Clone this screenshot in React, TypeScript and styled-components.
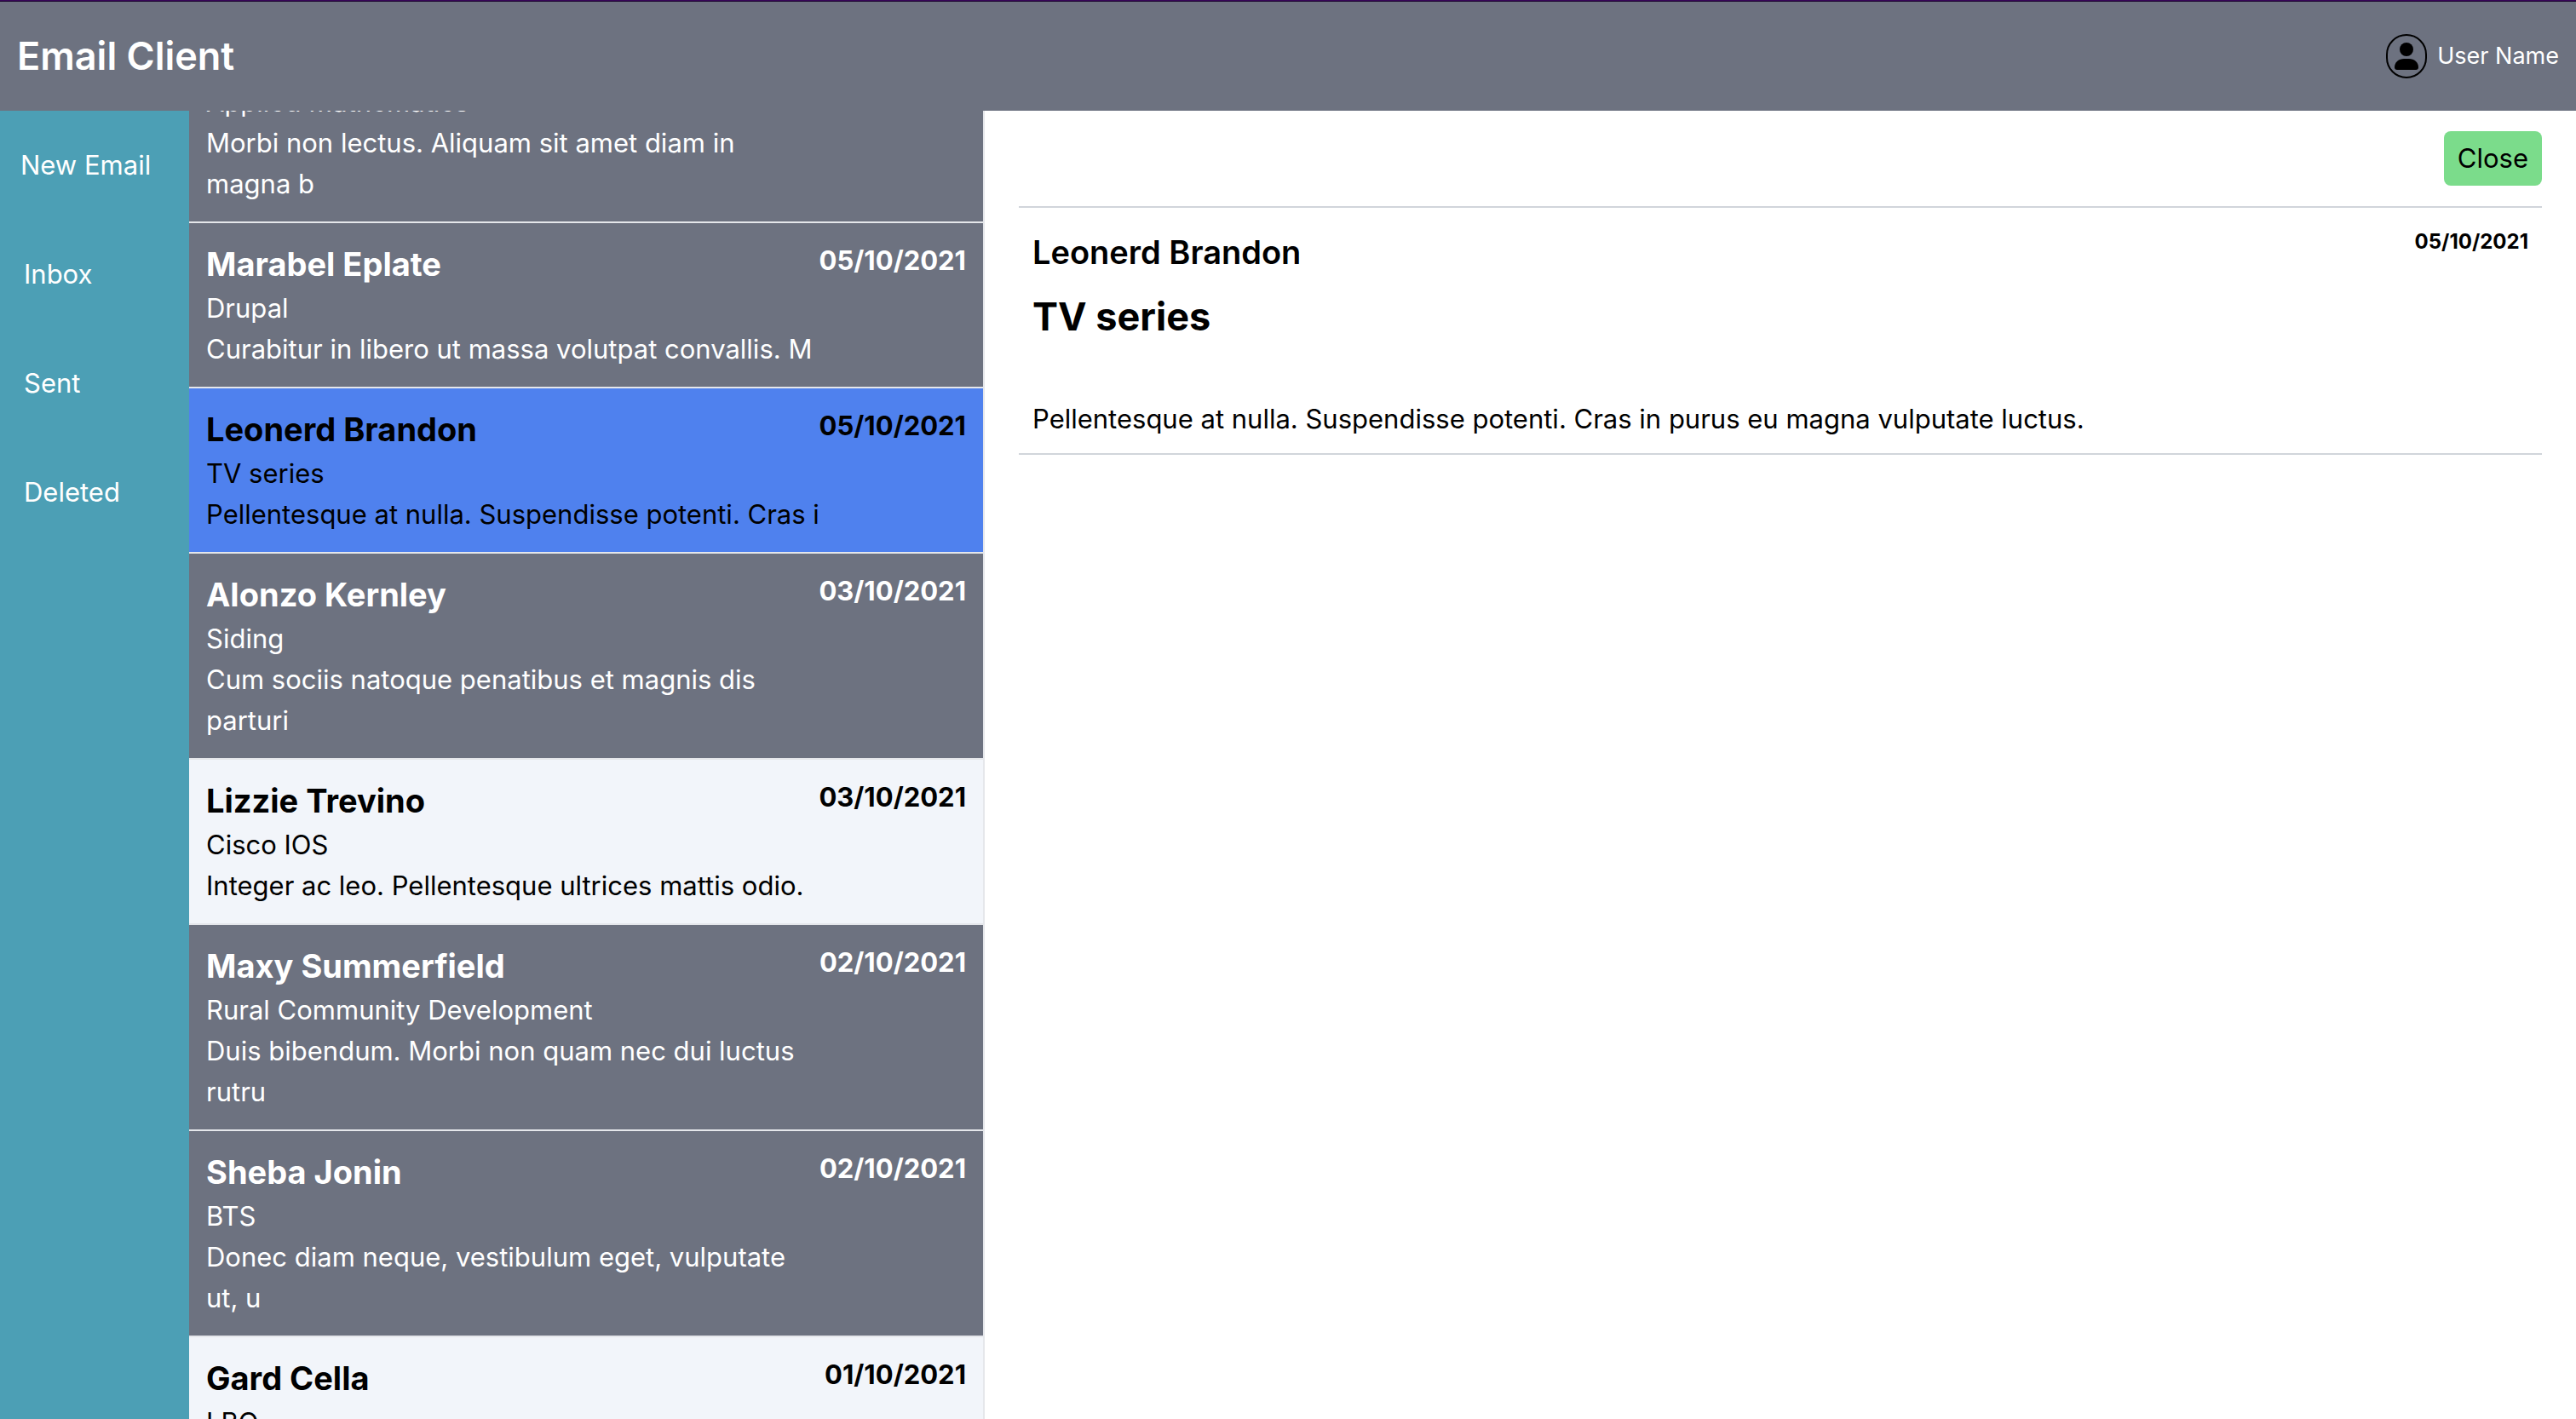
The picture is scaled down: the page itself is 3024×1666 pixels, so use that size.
import React from "react";
import styled, { createGlobalStyle, css } from "styled-components";

const GlobalStyle = createGlobalStyle`
  *, *::before, *::after { box-sizing: border-box; }
  html, body, #root { height: 100%; margin: 0; }
  body {
    font-family: Inter, "Liberation Sans", sans-serif;
    font-size: 31px;
    line-height: 48px;
    color: #000;
    background: #fff;
    overflow: hidden;
  }
  h1, h2, h3, p, ul { margin: 0; padding: 0; }
  ul { list-style: none; }
  button { font: inherit; color: inherit; border: 0; cursor: pointer; }
`;

const Page = styled.div`
  display: flex;
  flex-direction: column;
  height: 100vh;
  border-top: 1px solid #38065a;
`;

const Header = styled.header`
  display: flex;
  flex: none;
  align-items: center;
  justify-content: space-between;
  height: 129px;
  padding: 0 20px;
  color: #fff;
  background: #6d7280;
  border-top: 1px solid #1c0530;
`;

const Brand = styled.h1`
  font-size: 45px;
  line-height: 64px;
  font-weight: 600;
`;

const User = styled.div`
  display: flex;
  align-items: center;
  gap: 12px;
  font-size: 27px;
  line-height: 40px;
`;

const Avatar = styled.svg`
  display: block;
  width: 48px;
  height: 52px;
`;

const Body = styled.div`
  display: flex;
  flex: 1;
  min-height: 0;
`;

const Sidebar = styled.nav`
  display: flex;
  flex: none;
  flex-direction: column;
  width: 222px;
  color: #fff;
  background: #4c9fb5;
`;

const NavButton = styled.button<{ $lead?: boolean }>`
  height: 128px;
  padding: 0 0 0 ${(p) => (p.$lead ? 24 : 28)}px;
  text-align: left;
  white-space: nowrap;
  background: transparent;
`;

const MailList = styled.ul`
  display: flex;
  flex: none;
  flex-direction: column;
  width: 934px;
  overflow: hidden;
  border-right: 2px solid #e5e7eb;
`;

const tones = {
  read: css`
    color: #fff;
    background: #6d7280;
  `,
  unread: css`
    color: #000;
    background: #f2f5fa;
  `,
  selected: css`
    color: #000;
    background: #4f81ee;
  `,
};

type Tone = keyof typeof tones;

const MailItem = styled.li<{ $tone: Tone; $scrolled?: boolean }>`
  display: flex;
  flex: none;
  align-items: flex-start;
  padding: 20px;
  border-bottom: 2px solid #e5e7eb;
  ${(p) => tones[p.$tone]}
  ${(p) => p.$scrolled && "margin-top: -54px;"}
`;

const MailText = styled.div`
  flex: 1;
  min-width: 0;
  margin-right: -4px;
`;

const Sender = styled.h2`
  font-size: 38px;
  line-height: 56px;
  font-weight: 700;
`;

const MailDate = styled.time`
  flex: none;
  min-width: 172px;
  text-align: right;
  font-weight: 700;
`;

const Reader = styled.main`
  flex: 1;
  min-width: 0;
  padding: 24px 40px;
`;

const Actions = styled.div`
  display: flex;
  justify-content: flex-end;
  padding-bottom: 24px;
  border-bottom: 2px solid #d1d5db;
`;

const CloseButton = styled.button`
  padding: 8px 16px;
  border-radius: 8px;
  background: #7bdc8b;
`;

const Message = styled.article`
  padding: 16px;
  border-bottom: 2px solid #d1d5db;
`;

const MessageHead = styled.div`
  display: flex;
  align-items: flex-start;
  justify-content: space-between;
`;

const MessageSender = styled.h2`
  padding-top: 8px;
  font-size: 38px;
  line-height: 56px;
  font-weight: 600;
`;

const MessageDate = styled.time`
  font-size: 24px;
  font-weight: 700;
`;

const Subject = styled.h3`
  padding: 16px 0 64px;
  font-size: 45px;
  line-height: 64px;
  font-weight: 700;
`;

type Mail = { from?: string; subject: string; preview?: string; date?: string; tone: Tone };

const mails: Mail[] = [
  { subject: "Applied Mathematics", preview: "Morbi non lectus. Aliquam sit amet diam in magna b", tone: "read" },
  { from: "Marabel Eplate", subject: "Drupal", preview: "Curabitur in libero ut massa volutpat convallis. M", date: "05/10/2021", tone: "read" },
  { from: "Leonerd Brandon", subject: "TV series", preview: "Pellentesque at nulla. Suspendisse potenti. Cras i", date: "05/10/2021", tone: "selected" },
  { from: "Alonzo Kernley", subject: "Siding", preview: "Cum sociis natoque penatibus et magnis dis parturi", date: "03/10/2021", tone: "read" },
  { from: "Lizzie Trevino", subject: "Cisco IOS", preview: "Integer ac leo. Pellentesque ultrices mattis odio.", date: "03/10/2021", tone: "unread" },
  { from: "Maxy Summerfield", subject: "Rural Community Development", preview: "Duis bibendum. Morbi non quam nec dui luctus rutru", date: "02/10/2021", tone: "read" },
  { from: "Sheba Jonin", subject: "BTS", preview: "Donec diam neque, vestibulum eget, vulputate ut, u", date: "02/10/2021", tone: "read" },
  { from: "Gard Cella", subject: "LBO", date: "01/10/2021", tone: "unread" },
];

export default function App() {
  return (
    <Page>
      <GlobalStyle />
      <Header>
        <Brand>Email Client</Brand>
        <User>
          <Avatar viewBox="0 0 48 52" aria-hidden="true">
            <rect x="1" y="1" width="46" height="50" rx="23" fill="none" stroke="#000" strokeWidth="2" />
            <circle cx="24" cy="18" r="8" />
            <path d="M10 39c0-6 5-10 11-10h6c6 0 11 4 11 10 0 2-1 3-3 3H13c-2 0-3-1-3-3z" />
          </Avatar>
          <span>User Name</span>
        </User>
      </Header>
      <Body>
        <Sidebar>
          <NavButton $lead>New Email</NavButton>
          <NavButton>Inbox</NavButton>
          <NavButton>Sent</NavButton>
          <NavButton>Deleted</NavButton>
        </Sidebar>
        <MailList>
          {mails.map((m, i) => (
            <MailItem key={m.subject} $tone={m.tone} $scrolled={i === 0}>
              <MailText>
                {m.from && <Sender>{m.from}</Sender>}
                <p>{m.subject}</p>
                {m.preview && <p>{m.preview}</p>}
              </MailText>
              <MailDate>{m.date}</MailDate>
            </MailItem>
          ))}
        </MailList>
        <Reader>
          <Actions>
            <CloseButton>Close</CloseButton>
          </Actions>
          <Message>
            <MessageHead>
              <MessageSender>Leonerd Brandon</MessageSender>
              <MessageDate>05/10/2021</MessageDate>
            </MessageHead>
            <Subject>TV series</Subject>
            <p>Pellentesque at nulla. Suspendisse potenti. Cras in purus eu magna vulputate luctus.</p>
          </Message>
        </Reader>
      </Body>
    </Page>
  );
}
